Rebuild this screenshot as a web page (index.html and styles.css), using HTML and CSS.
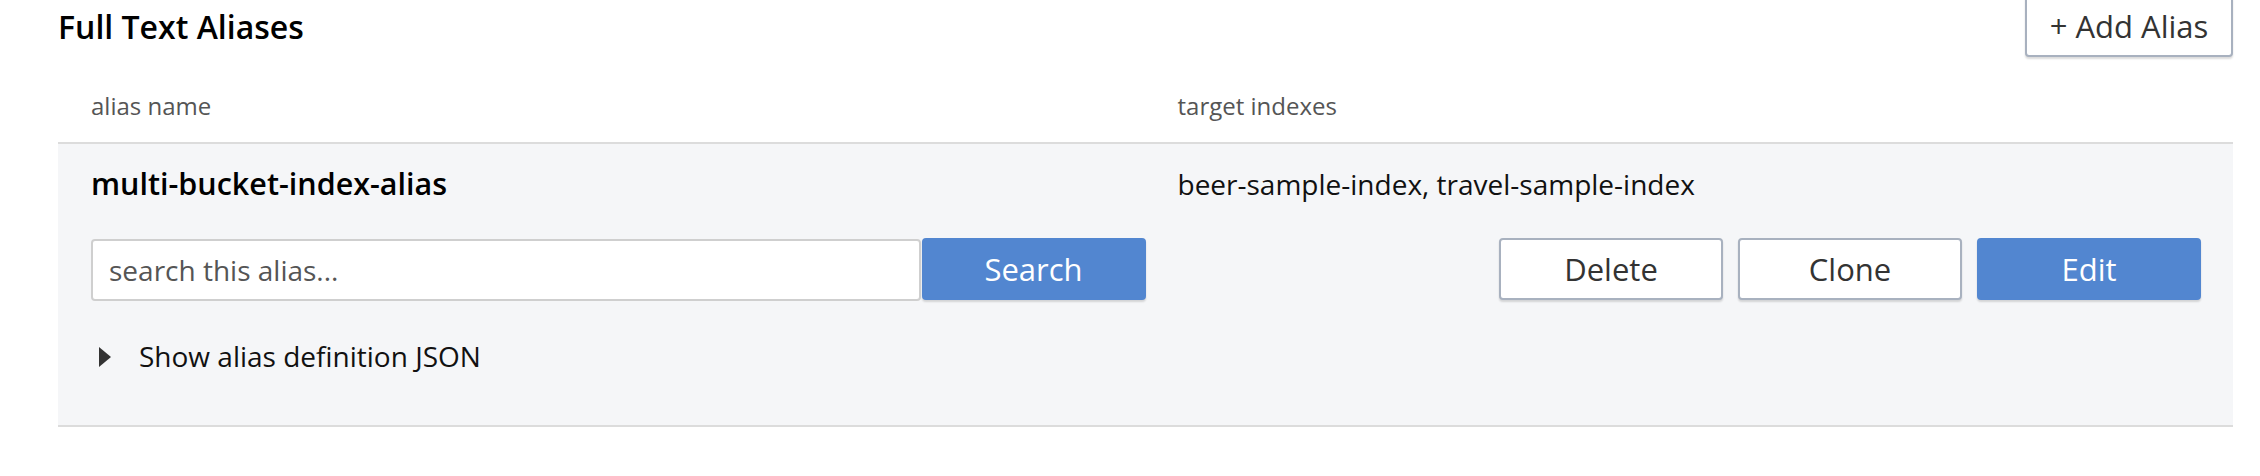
FILE: index.html
```html
<!DOCTYPE html>
<html>
<head>
<meta charset="utf-8">
<link rel="stylesheet" href="styles.css">
</head>
<body>
<div class="page">
  <div class="header">
    <h2 class="title">Full Text Aliases</h2>
    <button class="btn btn-outline btn-add">+ Add Alias</button>
  </div>
  <div class="grid cols">
    <div class="cell cell-left">alias name</div>
    <div class="cell cell-right">target indexes</div>
  </div>
  <div class="row">
    <div class="grid">
      <div class="cell cell-left name">multi-bucket-index-alias</div>
      <div class="cell cell-right targets">beer-sample-index, travel-sample-index</div>
    </div>
    <div class="grid actions">
      <div class="cell cell-left search">
        <input class="search-input" type="text" placeholder="search this alias...">
        <button class="btn btn-primary">Search</button>
      </div>
      <div class="cell cell-right buttons">
        <button class="btn btn-outline">Delete</button>
        <button class="btn btn-outline">Clone</button>
        <button class="btn btn-primary">Edit</button>
      </div>
    </div>
    <div class="disclosure">
      <span class="caret"></span>
      <span class="disclosure-text">Show alias definition JSON</span>
    </div>
  </div>
</div>
</body>
</html>
```

FILE: styles.css
```css
* { box-sizing: border-box; }

html, body {
  margin: 0;
  padding: 0;
  background: #ffffff;
  font-family: "Open Sans", "Liberation Sans", sans-serif;
  color: #111;
  overflow: hidden;
}

.page {
  margin-left: 58px;
  width: 2175px;
}

.header {
  display: flex;
  justify-content: space-between;
  align-items: center;
  height: 62px;
  margin-top: -5px;
}

.title {
  margin: 0;
  font-size: 32px;
  font-weight: 600;
  color: #000;
}

.grid {
  display: grid;
  grid-template-columns: 1fr 1fr;
  align-items: baseline;
}

.cell-left {
  padding-left: 33px;
}

.cell-right {
  padding-left: 32px;
  padding-right: 32px;
}

.cols {
  padding: 32px 0 20px;
  font-size: 24px;
  color: #555;
  border-bottom: 2px solid #dcdcdc;
}

.row {
  background: #f5f6f8;
  padding: 18px 0 50px;
  border-bottom: 2px solid #dcdcdc;
}

.name {
  font-size: 30.5px;
  font-weight: 600;
  color: #000;
}

.targets {
  font-size: 28px;
  color: #111;
}

.actions {
  margin-top: 34px;
  align-items: start;
}

.search {
  display: flex;
}

.search-input {
  flex: 1;
  height: 62px;
  margin: 1px 0 0;
  border: 2px solid #cfcfcf;
  border-radius: 4px;
  background: #fff;
  padding: 0 16px;
  font-family: "Open Sans", "Liberation Sans", sans-serif;
  font-size: 28px;
  color: #333;
  outline: none;
}

.search-input::placeholder {
  color: #555;
}

.search .btn {
  margin-left: 1px;
}

.btn {
  width: 224px;
  height: 62px;
  border-radius: 4px;
  font-family: "Open Sans", "Liberation Sans", sans-serif;
  font-size: 31px;
  padding: 0;
  cursor: pointer;
  box-shadow: 0 2px 2px rgba(0, 0, 0, 0.14);
}

.btn-primary {
  background: #5286d0;
  border: 2px solid #5286d0;
  color: #fff;
}

.btn-outline {
  background: #fff;
  border: 2px solid #a8b1bf;
  color: #333;
}

.btn-add {
  width: 208px;
}

.buttons {
  display: flex;
  justify-content: flex-end;
  gap: 15px;
}

.disclosure {
  display: flex;
  align-items: center;
  margin-top: 36px;
  padding-left: 41px;
  font-size: 28px;
  color: #111;
}

.caret {
  width: 0;
  height: 0;
  border-top: 10px solid transparent;
  border-bottom: 10px solid transparent;
  border-left: 12px solid #333;
  margin-right: 28px;
  margin-top: 2px;
}
```
